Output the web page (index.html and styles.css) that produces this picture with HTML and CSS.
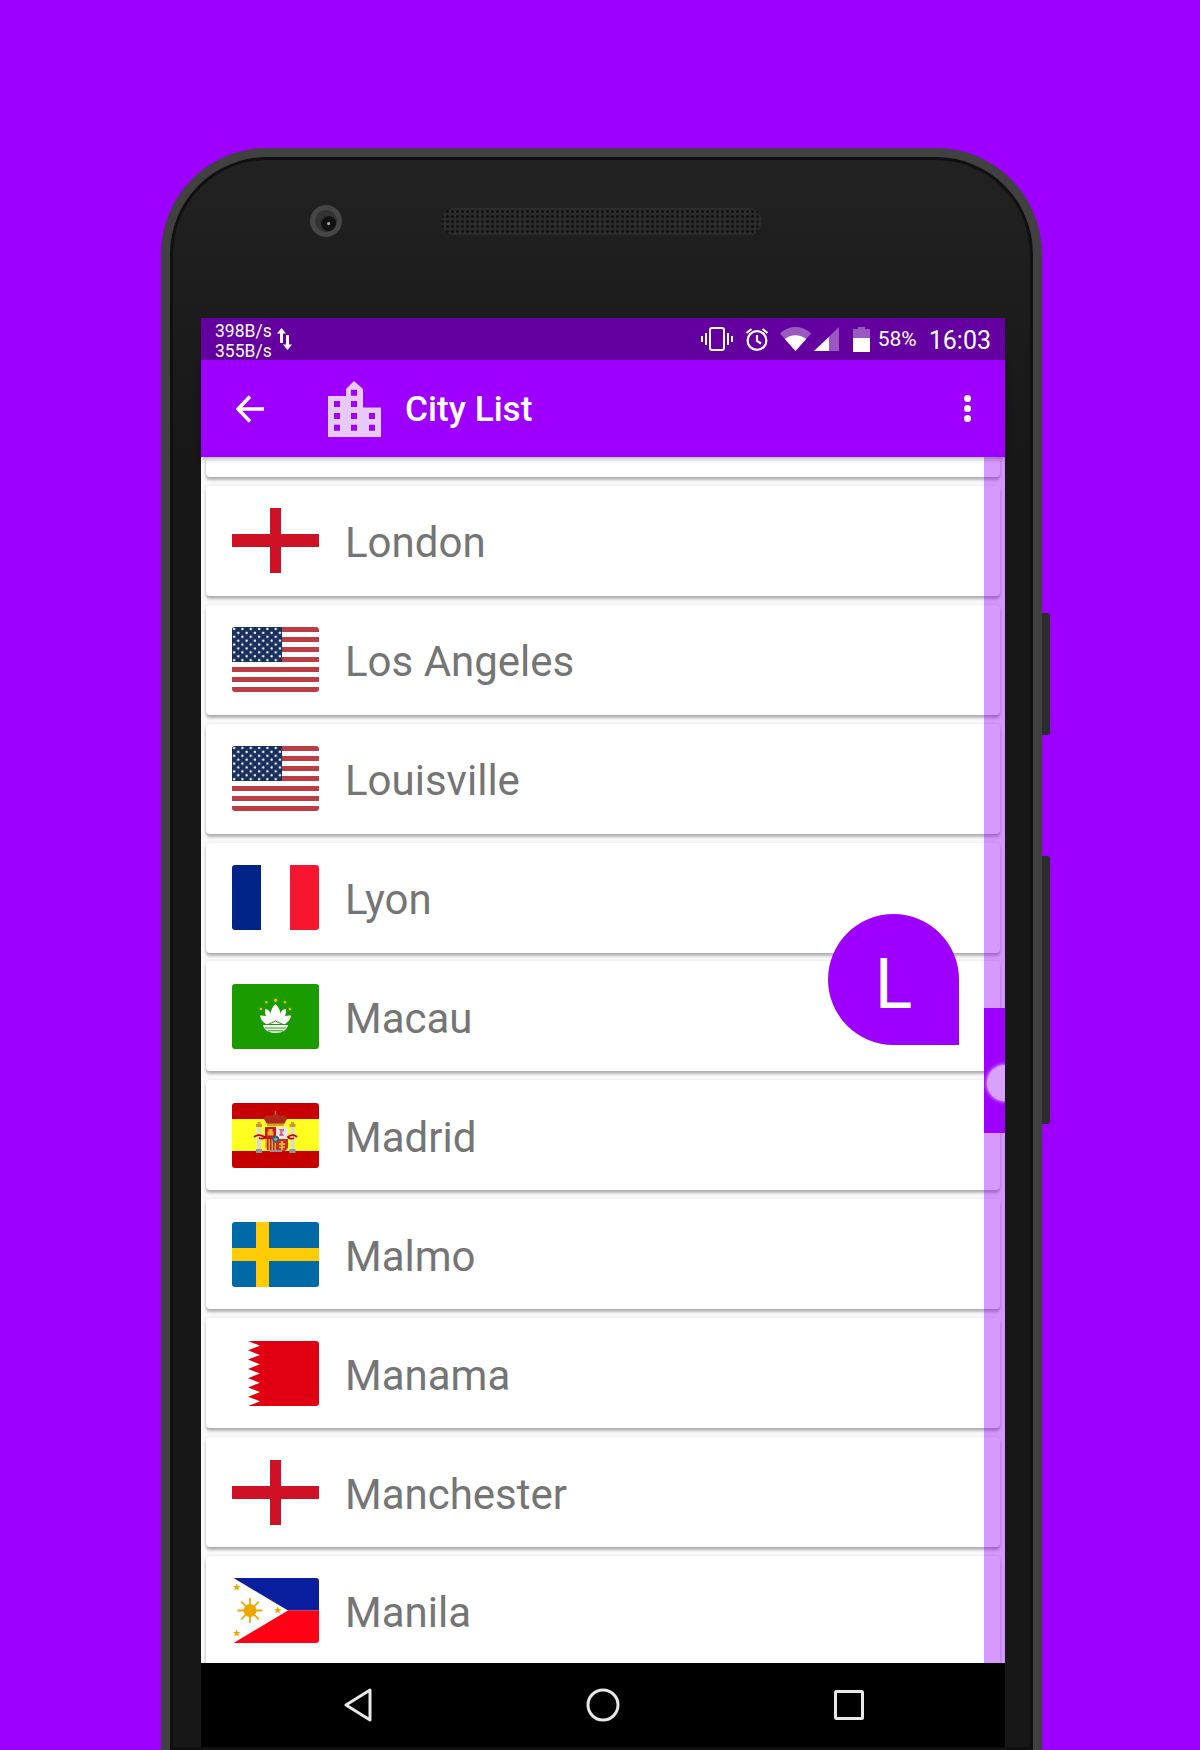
FILE: index.html
```html
<!DOCTYPE html>
<html lang="en">

<head>
    <meta charset="UTF-8">
    <meta name="viewport" content="width=device-width, initial-scale=1.0">
    <title>City List</title>
    <link rel="stylesheet" href="styles.css">
</head>

<body>
    <svg class="defs" aria-hidden="true">
        <defs>
            <pattern id="stars" width="8.33" height="7.8" patternUnits="userSpaceOnUse">
                <circle cx="2.1" cy="1.9" r="1.2" fill="#fff" />
                <circle cx="6.25" cy="5.8" r="1.2" fill="#fff" />
            </pattern>
        </defs>
        <symbol id="flag-england" viewBox="0 0 87 65">
            <rect width="87" height="65" fill="#fff" />
            <rect x="38" width="11" height="65" fill="#ce1124" />
            <rect y="26" width="87" height="13" fill="#ce1124" />
        </symbol>
        <symbol id="flag-us" viewBox="0 0 87 65">
            <rect width="87" height="65" fill="#fff" />
            <path fill="#bd3d44" d="M0 0h87v5H0zM0 10h87v5H0zM0 20h87v5H0zM0 30h87v5H0zM0 40h87v5H0zM0 50h87v5H0zM0 60h87v5H0z" />
            <rect width="50" height="35" fill="#192f5d" />
            <rect width="50" height="35" fill="url(#stars)" />
        </symbol>
        <symbol id="flag-france" viewBox="0 0 87 65">
            <rect width="29" height="65" fill="#002488" />
            <rect x="29" width="29" height="65" fill="#fff" />
            <rect x="58" width="29" height="65" fill="#f7152f" />
        </symbol>
        <symbol id="flag-macau" viewBox="0 0 87 65">
            <rect width="87" height="65" fill="#1a9c00" />
            <g fill="#f5b800">
                <circle cx="34.3" cy="18.3" r="1.3" />
                <circle cx="43.7" cy="16.3" r="1.7" />
                <circle cx="53" cy="18.3" r="1.3" />
                <circle cx="29" cy="25" r="1.3" />
                <circle cx="58" cy="25" r="1.3" />
            </g>
            <g fill="#fff">
                <path d="M43.5 20c4 4 6 9 5 15l-5 3-5-3c-1-6 1-11 5-15z" />
                <path d="M33 25c4 0 6 3 6.500 10l3 3c-6 0-10-5-9.500-13zM54 25c-4 0-6 3-6.500 10l-3 3c6 0 10-5 9.500-13z" />
                <path d="M28 31.500c5-.5 10 1.500 13 7l-5 1.500c-4-.5-7.500-4-8-8.500zM59 31.500c-5-.5-10 1.500-13 7l5 1.500c4-.5 7.500-4 8-8.500z" />
                <path d="M35 36h17l2 4H33z" />
                <path d="M31 41h25c-1 5-6 8-12.500 8S32 46 31 41z" />
            </g>
            <path fill="none" stroke="#1a9c00" stroke-width="1" d="M36 40.500l7.500-3.500 7.500 3.500M33 44h21M36 46.800h15" />
        </symbol>
        <symbol id="flag-spain" viewBox="0 0 87 65">
            <rect width="87" height="65" fill="#c60000" />
            <rect y="16" width="87" height="32" fill="#ffff22" />
            <rect x="42.800" y="8" width="1.400" height="7" fill="#c08a20" />
            <path fill="#b02a1c" d="M36 23l-4-7c0-3 4-5 7-3 2-2 7-2 9 0 3-2 7 0 7 3l-4 7z" />
            <rect x="35" y="20.500" width="17" height="2.500" fill="#d8a020" />
            <rect x="33" y="24" width="11" height="12" fill="#c8161c" />
            <rect x="44" y="24" width="12" height="12" fill="#efe4e4" />
            <path fill="#e8b030" d="M33 36h11v12c-3.500 2-7.500 1-11-3z" />
            <path fill="#c8161c" d="M35 36h1.500v11H35zM38 36h1.500v12H38zM41 36h1.500v12H41z" />
            <path fill="#c8301c" d="M44 36h12v9c-3 4-8 4.500-12 3z" />
            <path fill="#e8b030" d="M47 40h6v2h-6zM47 43.500h6v1.500h-6zM49 38h2v9h-2z" />
            <path fill="#e8b030" d="M36.500 26h4v2.500h1v4h-6v-4h1z" />
            <path fill="#c96a8a" d="M47 26h5v2l-2 1 2 4h-5l1.500-4z" />
            <circle cx="43.700" cy="36.300" r="3.500" fill="#2c5f9e" />
            <circle cx="43.700" cy="36.300" r="1.500" fill="#c8b040" />
            <path fill="#dcdccc" d="M25 24h4v23h-4zM58.500 24h4v23h-4z" />
            <path fill="#c89a20" d="M24 21h6v3h-6zM57.500 21h6v3h-6zM25.500 19h3v2h-3zM59 19h3v2h-3z" />
            <path fill="#8a96a8" d="M24 46h6v4h-6zM57.500 46h6v4h-6zM38 47h12v2H38z" />
            <path fill="none" stroke="#c60000" stroke-width="1.800" d="M22 34c3-3 7-2 11 0-1 2-4 2-6 1M65 34c-3-3-7-2-9 0 1 2 4 2 6 1" />
        </symbol>
        <symbol id="flag-sweden" viewBox="0 0 87 65">
            <rect width="87" height="65" fill="#006aa7" />
            <rect x="24" width="13" height="65" fill="#fecc00" />
            <rect y="26" width="87" height="13" fill="#fecc00" />
        </symbol>
        <symbol id="flag-bahrain" viewBox="0 0 87 65">
            <path fill="#e10011" d="M16 0h71v65H16l12-4.640-12-4.640 12-4.640-12-4.640 12-4.640-12-4.640 12-4.640-12-4.640 12-4.640-12-4.640 12-4.640-12-4.640 12-4.640-12-4.640z" />
        </symbol>
        <symbol id="flag-philippines" viewBox="0 0 87 65">
            <path fill="#0a1f9e" d="M1.500 0H87v32.500H56z" />
            <path fill="#ff0015" d="M1.500 65H87V32.500H56z" />
            <g fill="#eea800">
                <circle cx="18" cy="32.500" r="6.500" />
                <path stroke="#eea800" stroke-width="1.800" d="M18 20v25M5.500 32.500h25M9.200 23.700l17.600 17.600M26.800 23.700L9.200 41.300" />
                <path d="M4.700 5.500l1.100 2.400 2.600.2-2 1.700.6 2.600-2.300-1.400-2.300 1.400.6-2.600-2-1.700 2.600-.2zM4.700 51.500l1.100 2.400 2.600.2-2 1.700.6 2.600-2.300-1.400-2.300 1.400.6-2.600-2-1.700 2.600-.2zM45.700 28.500l1.100 2.400 2.600.2-2 1.700.6 2.600-2.300-1.400-2.300 1.400.6-2.600-2-1.700 2.600-.2z" />
            </g>
        </symbol>
    </svg>

    <div class="phone">
        <span class="side-key key-power"></span>
        <span class="side-key key-volume"></span>

        <div class="earpiece-row">
            <div class="camera"><span class="lens"></span></div>
            <div class="speaker"></div>
        </div>

        <div class="screen">
            <div class="status-bar">
                <div class="net-speed">
                    <span>398B/s</span>
                    <span>355B/s</span>
                </div>
                <svg class="ic-updown" viewBox="0 0 15 22" fill="#fff">
                    <path d="M4.500 0L9 5.500H6V15H3V5.500H0z" />
                    <path d="M10.500 22L6 16.500h3V7h3v9.500h3z" />
                </svg>
                <div class="status-right">
                    <svg class="ic-vibrate" viewBox="0 0 32 24" fill="none" stroke="#fff" stroke-width="2">
                        <rect x="9" y="1" width="14" height="22" rx="2" />
                        <path d="M5 6v12M1 9v6M27 6v12M31 9v6" />
                    </svg>
                    <svg class="ic-alarm" viewBox="0 0 24 24" fill="none" stroke="#fff" stroke-width="2.200">
                        <circle cx="12" cy="13.500" r="9.400" />
                        <path d="M12 8v6l4 2.500M1.500 6l5-4M22.500 6l-5-4" />
                    </svg>
                    <svg class="ic-wifi" viewBox="0 0 31 24">
                        <path fill="#fff" fill-opacity=".35" d="M0 6.500C4 2.500 9.500 0 15.500 0S27 2.500 31 6.500L15.500 24z" />
                        <path fill="#fff" d="M4.800 12c3-2.400 6.700-3.800 10.700-3.800s7.700 1.400 10.700 3.800L15.500 24z" />
                    </svg>
                    <svg class="ic-signal" viewBox="0 0 25 24">
                        <path fill="#fff" fill-opacity=".35" d="M25 0v24H0z" />
                        <path fill="#fff" d="M15 10v14H0z" />
                    </svg>
                    <svg class="ic-battery" viewBox="0 0 17 25">
                        <path fill="#fff" fill-opacity=".35" d="M5 0h7v2h5v10H0V2h5z" />
                        <rect y="11" width="17" height="14" fill="#fff" />
                    </svg>
                    <span class="battery-text">58%</span>
                    <span class="clock">16:03</span>
                </div>
            </div>

            <header class="app-bar">
                <svg class="ic-back" viewBox="0 0 28 28" fill="none" stroke="#fff" stroke-width="3.500">
                    <path d="M28 14H3M14 1.500L2 14l12 12.500" />
                </svg>
                <svg class="ic-city" viewBox="0 0 53 56">
                    <path fill="#e7c8ff" d="M0 15h18V8l8-8 9 8v18.500h18V56H0z" />
                    <path fill="#9d00ff" d="M23 8.700h6v6h-6zM6 20h6v6H6zM23 20h6v6h-6zM6 32h6v6H6zM23 32h6v6h-6zM41 32h6v6h-6zM6 43.700h6v6H6zM23 43.700h6v6h-6zM41 43.700h6v6h-6z" />
                </svg>
                <h1 class="app-title">City List</h1>
                <div class="overflow-dots"><span></span><span></span><span></span></div>
            </header>

            <div class="list-wrap">
                <ul class="city-list">
                    <li class="city-row row-cut"></li>
                    <li class="city-row"><svg class="flag"><use href="#flag-england" /></svg><span class="city-name">London</span></li>
                    <li class="city-row"><svg class="flag"><use href="#flag-us" /></svg><span class="city-name">Los Angeles</span></li>
                    <li class="city-row"><svg class="flag"><use href="#flag-us" /></svg><span class="city-name">Louisville</span></li>
                    <li class="city-row"><svg class="flag"><use href="#flag-france" /></svg><span class="city-name">Lyon</span></li>
                    <li class="city-row"><svg class="flag"><use href="#flag-macau" /></svg><span class="city-name">Macau</span></li>
                    <li class="city-row"><svg class="flag"><use href="#flag-spain" /></svg><span class="city-name">Madrid</span></li>
                    <li class="city-row"><svg class="flag"><use href="#flag-sweden" /></svg><span class="city-name">Malmo</span></li>
                    <li class="city-row"><svg class="flag"><use href="#flag-bahrain" /></svg><span class="city-name">Manama</span></li>
                    <li class="city-row"><svg class="flag"><use href="#flag-england" /></svg><span class="city-name">Manchester</span></li>
                    <li class="city-row"><svg class="flag"><use href="#flag-philippines" /></svg><span class="city-name">Manila</span></li>
                </ul>

                <div class="scroll-track">
                    <div class="scroll-thumb"><span class="scroll-knob"></span></div>
                </div>
                <div class="letter-bubble">L</div>
            </div>

            <nav class="nav-bar">
                <svg class="ic-nav-back" viewBox="0 0 28 34" fill="none" stroke="#e8e8e8" stroke-width="3" stroke-linejoin="round">
                    <path d="M26 2L2 17l24 15z" />
                </svg>
                <svg class="ic-nav-home" viewBox="0 0 34 34" fill="none" stroke="#e8e8e8" stroke-width="3">
                    <circle cx="17" cy="17" r="15" />
                </svg>
                <svg class="ic-nav-recent" viewBox="0 0 30 30" fill="none" stroke="#e8e8e8" stroke-width="3" stroke-linejoin="round">
                    <rect x="1.500" y="1.500" width="27" height="27" rx="1" />
                </svg>
            </nav>
        </div>
    </div>
</body>

</html>
```

FILE: styles.css
```css
body {
    margin: 0;
    height: 1750px;
    overflow: hidden;
    background-color: #9d00ff;
    font-family: Roboto, "Liberation Sans", sans-serif;
}

.defs {
    position: absolute;
    width: 0;
    height: 0;
}

.phone {
    position: relative;
    box-sizing: border-box;
    width: 881px;
    height: 1602px;
    margin: 148px 0 0 161px;
    padding: 0 28px 0 31px;
    background: linear-gradient(#222222, #171717 300px);
    border: 9px solid #414141;
    border-bottom: 0;
    border-radius: 106px 106px 0 0;
    box-shadow: inset 0 0 0 3px #101010;
}

.side-key {
    position: absolute;
    left: 872px;
    width: 8px;
    background-color: #2c2c2c;
    border-radius: 0 3px 3px 0;
}

.key-power {
    top: 456px;
    height: 122px;
}

.key-volume {
    top: 699px;
    height: 268px;
}

.earpiece-row {
    display: flex;
    align-items: center;
    box-sizing: border-box;
    height: 161px;
    padding-left: 109px;
}

.camera {
    display: flex;
    align-items: center;
    justify-content: center;
    width: 32px;
    height: 32px;
    margin-top: -33px;
    border-radius: 50%;
    background-color: #464646;
}

.lens {
    width: 22px;
    height: 22px;
    border-radius: 50%;
    background: radial-gradient(circle at 62% 62%, #aaaaaa 0 1px, #111111 2px 7px, #333333 8px);
}

.speaker {
    width: 321px;
    height: 27px;
    margin-top: -33px;
    margin-left: 99px;
    border-radius: 14px;
    background-color: #2b2b2b;
    background-image: radial-gradient(circle, #111111 1.2px, transparent 1.6px);
    background-size: 5px 5px;
    background-position: 4px 1px;
}

.screen {
    display: flex;
    flex-direction: column;
    width: 804px;
    height: 1429px;
    background-color: #000000;
}

.status-bar {
    display: flex;
    align-items: center;
    flex-shrink: 0;
    height: 42px;
    padding: 0 14px 0 14px;
    background-color: #6400a0;
    color: #ffffff;
}

.net-speed {
    display: flex;
    flex-direction: column;
    margin-top: 4px;
    font-size: 17.5px;
    line-height: 20px;
}

.ic-updown {
    width: 15px;
    height: 22px;
    margin-left: 5px;
}

.status-right {
    display: flex;
    align-items: center;
    margin-left: auto;
}

.ic-vibrate {
    width: 32px;
    height: 24px;
}

.ic-alarm {
    width: 24px;
    height: 24px;
    margin-left: 12px;
}

.ic-wifi {
    width: 31px;
    height: 24px;
    margin-left: 11px;
}

.ic-signal {
    width: 25px;
    height: 24px;
    margin-left: 3px;
}

.ic-battery {
    width: 17px;
    height: 25px;
    margin-left: 14px;
}

.battery-text {
    margin-left: 8px;
    font-size: 21px;
}

.clock {
    margin-top: 2px;
    margin-left: 12px;
    font-size: 25px;
}

.app-bar {
    position: relative;
    z-index: 2;
    display: flex;
    align-items: center;
    flex-shrink: 0;
    height: 97px;
    padding-left: 35px;
    background-color: #9d00ff;
    box-shadow: 0 2px 5px rgba(0, 0, 0, 0.3);
}

.ic-back {
    width: 28px;
    height: 28px;
}

.ic-city {
    width: 53px;
    height: 56px;
    margin-left: 64px;
}

.app-title {
    margin: 0 0 0 24px;
    font-size: 35.2px;
    font-weight: 500;
    color: #ffffff;
}

.overflow-dots {
    display: flex;
    flex-direction: column;
    gap: 3px;
    margin-left: auto;
    margin-right: 34px;
}

.overflow-dots span {
    width: 7px;
    height: 7px;
    border-radius: 50%;
    background-color: #ffffff;
}

.list-wrap {
    position: relative;
    flex: 1;
    overflow: hidden;
    background-color: #fafafa;
}

.city-list {
    display: flex;
    flex-direction: column;
    gap: 8.9px;
    margin: 0;
    padding: 0 5px;
    list-style: none;
}

.city-row {
    display: flex;
    align-items: center;
    flex-shrink: 0;
    height: 110px;
    padding-left: 26px;
    background-color: #ffffff;
    border-radius: 4px;
    box-shadow: 0 3px 3px rgba(0, 0, 0, 0.28), 0 0 3px rgba(0, 0, 0, 0.1);
}

.row-cut {
    height: 20px;
}

.flag {
    flex-shrink: 0;
    width: 87px;
    height: 65px;
    border-radius: 3px;
}

.city-name {
    margin-left: 26px;
    padding-top: 4px;
    font-size: 42px;
    color: #757575;
}

.scroll-track {
    position: absolute;
    top: 0;
    right: 0;
    bottom: 0;
    width: 21px;
    background-color: rgba(157, 0, 255, 0.4);
}

.scroll-thumb {
    position: absolute;
    top: 551px;
    left: 0;
    width: 21px;
    height: 125px;
    overflow: hidden;
    background-color: #9d00ff;
}

.scroll-knob {
    position: absolute;
    top: 57px;
    left: 3px;
    width: 36px;
    height: 36px;
    border-radius: 50%;
    background-color: #d9a0ff;
    box-shadow: 0 0 4px #f0dcff;
}

.letter-bubble {
    position: absolute;
    top: 457px;
    left: 627px;
    width: 131px;
    height: 131px;
    border-radius: 50% 50% 0 50%;
    background-color: #9d00ff;
    color: #ffffff;
    font-size: 70px;
    line-height: 141px;
    text-align: center;
}

.nav-bar {
    display: flex;
    align-items: center;
    flex-shrink: 0;
    height: 84px;
    padding-left: 143px;
    background-color: #000000;
}

.ic-nav-back {
    width: 28px;
    height: 34px;
}

.ic-nav-home {
    width: 34px;
    height: 34px;
    margin-left: 214px;
}

.ic-nav-recent {
    width: 30px;
    height: 30px;
    margin-left: 214px;
}
```
